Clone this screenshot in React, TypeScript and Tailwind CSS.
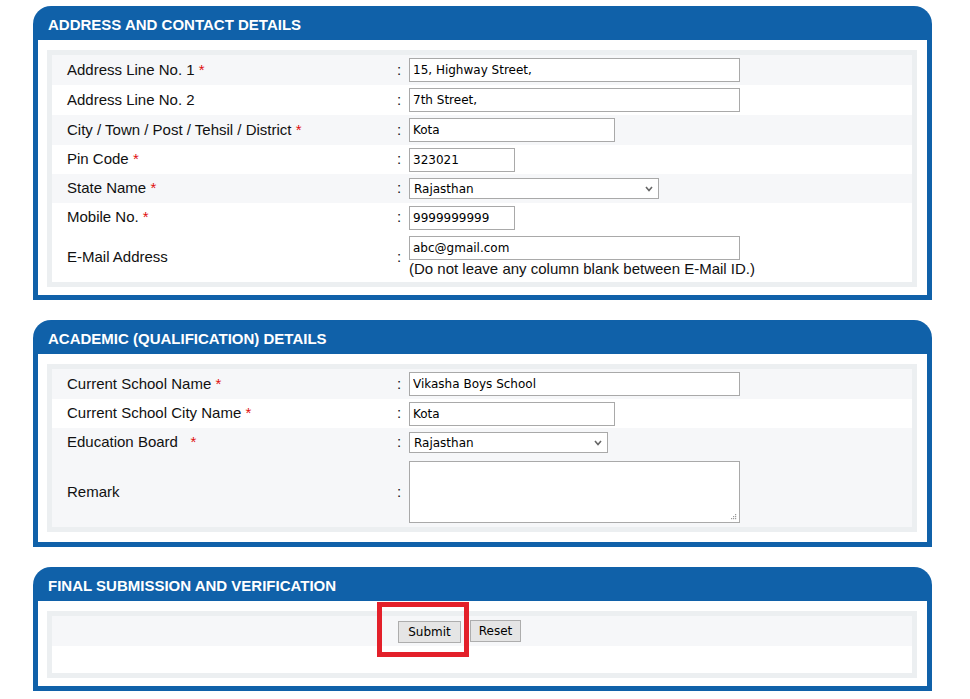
import type { ReactNode } from 'react';

const inputFont = { fontFamily: '"DejaVu Sans", Tahoma, sans-serif' };

function Panel({ title, pb = 'pb-[8px]', children }: { title: string; pb?: string; children: ReactNode }) {
  return (
    <div className="ml-[33px] w-[899px] rounded-t-[18px] bg-[#1061a9] px-[5px] pb-[5px]">
      <div className="flex h-[34px] items-center pl-[10px] pt-[5px] text-[15px] font-bold text-white">{title}</div>
      <div className={`bg-white pt-[10px] ${pb} pl-[9px] pr-[10px]`}>
        <div className="border-[5px] border-[#eceff1]">{children}</div>
      </div>
    </div>
  );
}

function Row({
  label,
  required,
  light,
  h,
  children,
}: {
  label: string;
  required?: boolean;
  light?: boolean;
  h: string;
  children: ReactNode;
}) {
  return (
    <div className={`flex items-center ${h} ${light ? 'bg-[#f6f7f9]' : 'bg-white'}`}>
      <div className="w-[341px] pl-[15px] text-[15px] text-[#111]">
        {label}
        {required && <span className="text-[#e01010]"> *</span>}
      </div>
      <div className="w-[16px] pl-[4px] text-[15px] text-[#111]">:</div>
      <div>{children}</div>
    </div>
  );
}

function TextBox({ value, w }: { value: string; w: string }) {
  return (
    <input
      readOnly
      value={value}
      style={inputFont}
      className={`${w} block h-[24px] border border-[#a9a9a9] bg-white px-[3px] text-[12px] text-black outline-none`}
    />
  );
}

function SelectBox({ value, w }: { value: string; w: string }) {
  return (
    <div
      style={inputFont}
      className={`${w} relative flex h-[21px] items-center border border-[#a9a9a9] bg-white pl-[4px] text-[12px] text-black`}
    >
      {value}
      <svg className="absolute right-[5px] top-[7px]" width="8" height="6" viewBox="0 0 8 6">
        <polyline points="1,1 4,4.5 7,1" fill="none" stroke="#666" strokeWidth="1.6" />
      </svg>
    </div>
  );
}

export default function App() {
  return (
    <div className="min-h-[699px] w-[970px] bg-white pt-[6px]" style={{ fontFamily: '"Liberation Sans", Arial, sans-serif' }}>
      <Panel title="ADDRESS AND CONTACT DETAILS">
        <Row label="Address Line No. 1" required light h="h-[30px]">
          <TextBox value="15, Highway Street," w="w-[331px]" />
        </Row>
        <Row label="Address Line No. 2" h="h-[30px]">
          <TextBox value="7th Street," w="w-[331px]" />
        </Row>
        <Row label="City / Town / Post / Tehsil / District" required light h="h-[30px]">
          <TextBox value="Kota" w="w-[206px]" />
        </Row>
        <Row label="Pin Code" required h="h-[29px]">
          <TextBox value="323021" w="w-[106px]" />
        </Row>
        <Row label="State Name" required light h="h-[29px]">
          <SelectBox value="Rajasthan" w="w-[250px]" />
        </Row>
        <Row label="Mobile No." required h="h-[29px]">
          <TextBox value="9999999999" w="w-[106px]" />
        </Row>
        <Row label="E-Mail Address" h="h-[50px]">
          <TextBox value="abc@gmail.com" w="w-[331px]" />
          <div className="text-[15px] leading-[18px] text-[#111]">(Do not leave any column blank between E-Mail ID.)</div>
        </Row>
      </Panel>

      <div className="h-[20px]" />

      <Panel title="ACADEMIC (QUALIFICATION) DETAILS" pb="pb-[10px]">
        <Row label="Current School Name" required light h="h-[30px]">
          <TextBox value="Vikasha Boys School" w="w-[331px]" />
        </Row>
        <Row label="Current School City Name" required h="h-[29px]">
          <TextBox value="Kota" w="w-[206px]" />
        </Row>
        <Row label={'Education Board\u00a0\u00a0'} required light h="h-[29px]">
          <SelectBox value="Rajasthan" w="w-[199px]" />
        </Row>
        <Row label="Remark" light h="h-[70px]">
          <div className="relative h-[62px] w-[331px] border border-[#a9a9a9] bg-white">
            <svg className="absolute bottom-[2px] right-[2px]" width="7" height="7" viewBox="0 0 7 7">
              <rect x="5" y="1" width="1.2" height="1.2" fill="#999" />
              <rect x="3" y="3" width="1.2" height="1.2" fill="#999" />
              <rect x="5" y="3" width="1.2" height="1.2" fill="#999" />
              <rect x="1" y="5" width="1.2" height="1.2" fill="#999" />
              <rect x="3" y="5" width="1.2" height="1.2" fill="#999" />
              <rect x="5" y="5" width="1.2" height="1.2" fill="#999" />
            </svg>
          </div>
        </Row>
      </Panel>

      <div className="h-[20px]" />

      <Panel title="FINAL SUBMISSION AND VERIFICATION">
        <div className="flex h-[30px] items-center gap-[9px] bg-[#f6f7f9] pl-[346px]">
          <div className="relative">
            <button
              style={inputFont}
              className="h-[22px] w-[63px] border border-[#adadad] bg-[#e5e5e5] text-[12px] text-black"
            >
              Submit
            </button>
            <div className="pointer-events-none absolute left-[-21px] top-[-17px] h-[55px] w-[92px] border-[5px] border-[#e3202a]" />
          </div>
          <button
            style={inputFont}
            className="h-[22px] w-[51px] border border-[#adadad] bg-[#e5e5e5] text-[12px] text-black"
          >
            Reset
          </button>
        </div>
        <div className="h-[27px] bg-white" />
      </Panel>
    </div>
  );
}
